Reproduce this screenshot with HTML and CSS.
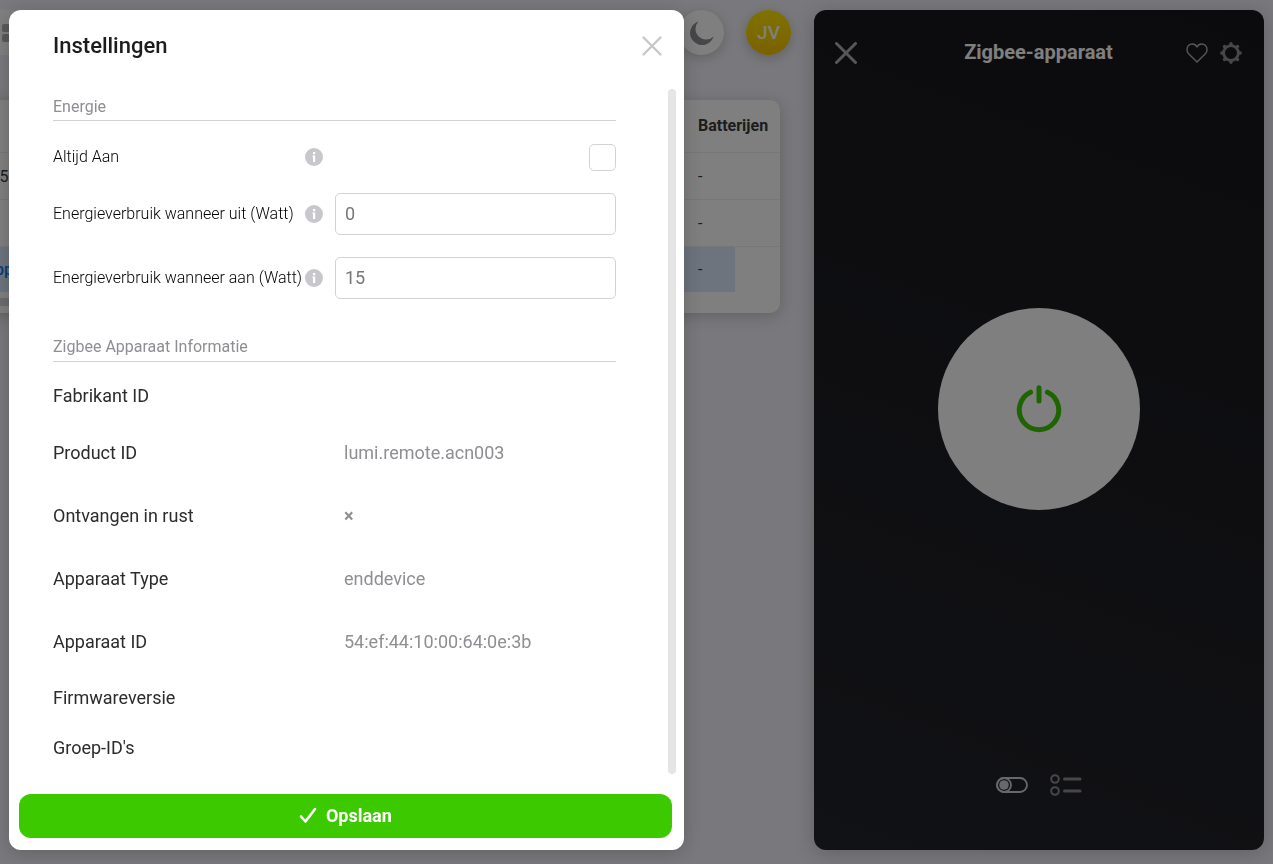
FILE: index.html
```
<!DOCTYPE html>
<html lang="nl">
<head>
    <meta charset="UTF-8">
    <meta name="viewport" content="width=device-width, initial-scale=1">
    <title>Instellingen</title>
    <link rel="stylesheet" href="styles.css">
</head>
<body>
    <div class="page">
        <main class="main">
            <div class="topbar">
                <div class="toolbar">
                    <svg class="grid_icon" viewBox="0 0 18 18"><rect width="8" height="8" rx="2"/><rect x="10" width="8" height="8" rx="2"/><rect y="10" width="8" height="8" rx="2"/><rect x="10" y="10" width="8" height="8" rx="2"/></svg>
                </div>
                <button class="round" type="button" aria-label="Donkere modus">
                    <svg class="moon" viewBox="0 0 24 24"><path d="M8.5 0.6A12 12 0 1 0 23.6 15.4A9.6 9.6 0 0 1 8.5 0.6Z"/></svg>
                </button>
                <button class="round avatar" type="button">JV</button>
            </div>
            <div class="card">
                <table class="devices">
                    <thead>
                        <tr><th></th><th>Batterijen</th><th></th></tr>
                    </thead>
                    <tbody>
                        <tr><td>Sensor M5</td><td>-</td><td></td></tr>
                        <tr><td></td><td>-</td><td></td></tr>
                        <tr class="selected"><td>Zigbee-apparaat</td><td>-</td><td></td></tr>
                    </tbody>
                </table>
                <div class="hscroll"></div>
            </div>
        </main>
        <aside class="device">
            <header class="device_head">
                <button class="icon_btn" type="button" aria-label="Sluiten">
                    <svg class="close_big" viewBox="0 0 22 22"><path d="M1.5 1.5L20.5 20.5M20.5 1.5L1.5 20.5"/></svg>
                </button>
                <h2 class="device_title">Zigbee-apparaat</h2>
                <div class="device_actions">
                    <button class="icon_btn" type="button" aria-label="Favoriet">
                        <svg class="heart" viewBox="0 0 22 20"><path d="M11 19L2.4 10.4A5.4 5.4 0 0 1 1 6.6C1 3.4 3.3 1 6.2 1C8.4 1 10.2 2.2 11 4C11.8 2.2 13.6 1 15.8 1C18.7 1 21 3.4 21 6.6A5.4 5.4 0 0 1 19.6 10.4Z"/></svg>
                    </button>
                    <button class="icon_btn" type="button" aria-label="Instellingen">
                        <svg class="gear" viewBox="0 0 22 22">
                            <circle class="gear_ring" cx="11" cy="11" r="7.4"/>
                            <g class="gear_teeth">
                                <path d="M11 1.8V3.4M11 18.6V20.2M1.8 11H3.4M18.6 11H20.2"/>
                                <path d="M4.5 4.5L5.6 5.6M16.4 16.4L17.5 17.5M4.5 17.5L5.6 16.4M16.4 5.6L17.5 4.5"/>
                            </g>
                        </svg>
                    </button>
                </div>
            </header>
            <div class="device_body">
                <button class="power" type="button" aria-label="Aan/uit">
                    <svg class="power_icon" viewBox="0 0 46 48"><path d="M14.5 7.2A19.7 19.7 0 1 0 31.5 7.2M23 2.8V16"/></svg>
                </button>
            </div>
            <footer class="device_foot">
                <button class="icon_btn" type="button" aria-label="Schakelaar">
                    <svg class="switch" viewBox="0 0 32 16"><rect x="1" y="1" width="30" height="14" rx="7"/><circle cx="8" cy="8" r="7"/><circle class="dot" cx="8" cy="8" r="4.8"/></svg>
                </button>
                <button class="icon_btn" type="button" aria-label="Lijst">
                    <svg class="list" viewBox="0 0 32 22"><circle cx="5" cy="5" r="3.8"/><circle cx="5" cy="17" r="3.8"/><path d="M14.5 5H30M14.5 17H30"/></svg>
                </button>
            </footer>
        </aside>
    </div>

    <div class="overlay">
        <form class="modal" role="dialog" aria-labelledby="modal_title">
            <div class="modal_head">
                <h1 class="modal_title" id="modal_title">Instellingen</h1>
                <button class="icon_btn" type="button" aria-label="Sluiten">
                    <svg class="close" viewBox="0 0 20 20"><path d="M1.5 1.5L18.5 18.5M18.5 1.5L1.5 18.5"/></svg>
                </button>
            </div>
            <div class="modal_body">
                <div class="fields">
                    <h3 class="section">Energie</h3>
                    <div class="row check_row">
                        <div class="name">
                            <label for="always_on">Altijd Aan</label>
                            <svg class="info" viewBox="0 0 18 18"><circle cx="9" cy="9" r="9"/><path d="M8 4H10.2V6.2H8ZM7.4 7.6H10.2V14H8V8.8H7.4Z"/></svg>
                        </div>
                        <input class="check" type="checkbox" id="always_on">
                    </div>
                    <div class="row">
                        <div class="name">
                            <label for="watt_off">Energieverbruik wanneer uit (Watt)</label>
                            <svg class="info" viewBox="0 0 18 18"><circle cx="9" cy="9" r="9"/><path d="M8 4H10.2V6.2H8ZM7.4 7.6H10.2V14H8V8.8H7.4Z"/></svg>
                        </div>
                        <input class="text" type="text" id="watt_off" value="0">
                    </div>
                    <div class="row">
                        <div class="name">
                            <label for="watt_on">Energieverbruik wanneer aan (Watt)</label>
                            <svg class="info" viewBox="0 0 18 18"><circle cx="9" cy="9" r="9"/><path d="M8 4H10.2V6.2H8ZM7.4 7.6H10.2V14H8V8.8H7.4Z"/></svg>
                        </div>
                        <input class="text" type="text" id="watt_on" value="15">
                    </div>
                    <h3 class="section second">Zigbee Apparaat Informatie</h3>
                    <dl class="details">
                        <div class="detail"><dt>Fabrikant ID</dt><dd></dd></div>
                        <div class="detail filled"><dt>Product ID</dt><dd>lumi.remote.acn003</dd></div>
                        <div class="detail filled"><dt>Ontvangen in rust</dt><dd class="flag">×</dd></div>
                        <div class="detail filled"><dt>Apparaat Type</dt><dd>enddevice</dd></div>
                        <div class="detail filled"><dt>Apparaat ID</dt><dd>54:ef:44:10:00:64:0e:3b</dd></div>
                        <div class="detail"><dt>Firmwareversie</dt><dd></dd></div>
                        <div class="detail"><dt>Groep-ID's</dt><dd></dd></div>
                    </dl>
                </div>
                <div class="scrollbar"></div>
            </div>
            <button class="save" type="submit">
                <svg class="tick" viewBox="0 0 18 18"><path d="M2 10.5L6.5 15.5L16 3"/></svg>
                Opslaan
            </button>
        </form>
    </div>
</body>
</html>
```

FILE: styles.css
```
*{
    box-sizing: border-box;
}
body{
    margin: 0;
    height: 100vh;
    overflow: hidden;
    background-color: #f2f1f8;
    color: #1c1c1e;
    font-family: Roboto, "Liberation Sans", sans-serif;
    font-size: 16px;
}
button{
    border: 0;
    padding: 0;
    background: none;
    font-family: inherit;
    cursor: pointer;
}
svg{
    display: block;
}
.icon_btn svg{
    fill: none;
    stroke-linecap: round;
    stroke-linejoin: round;
}
/* page under the dialog */
.page{
    display: grid;
    grid-template-columns: minmax(0, 1fr) 450px;
    gap: 34px;
    height: 100vh;
    padding: 10px 9px 14px 0;
}
.main{
    /* the list is scrolled partly out of view */
    margin-left: -80px;
}
.topbar{
    display: flex;
    gap: 22px;
    height: 45px;
    margin-right: -11px;
}
.toolbar{
    flex: 1;
    display: flex;
    align-items: center;
    padding-left: 82px;
    background-color: #fff;
}
.grid_icon{
    width: 18px;
    fill: #b4b4b8;
}
.round{
    display: flex;
    align-items: center;
    justify-content: center;
    width: 45px;
    height: 45px;
    border-radius: 50%;
    background-color: #fff;
    box-shadow: 0 3px 12px rgba(0,0,0,.2);
}
.moon{
    width: 24px;
    fill: #8e8e93;
}
.avatar{
    background: linear-gradient(#ffe600, #f4c200);
    color: #fff;
    font-size: 19px;
    font-weight: 500;
}
.card{
    height: 213px;
    margin-top: 45px;
    border-radius: 0 10px 10px 0;
    background-color: #fff;
    box-shadow: 0 3px 16px rgba(0,0,0,.2);
}
.devices{
    width: 100%;
    border-collapse: collapse;
    table-layout: fixed;
    text-align: left;
    color: #3a3a3c;
}
.devices th{
    height: 52px;
    padding: 0;
    white-space: nowrap;
    font-weight: 700;
}
.devices td{
    height: 47px;
    padding: 2px 0 0;
}
.devices tr{
    border-bottom: 1px solid #eeeef2;
}
.devices tbody tr:last-child{
    border-bottom: 0;
}
.devices .selected td{
    height: 46px;
    padding-top: 0;
}
.devices td:first-child{
    padding-left: 12px;
}
.devices th:nth-child(2),
.devices td:nth-child(2){
    width: 51px;
    padding-left: 14px;
}
.devices th:nth-child(3){
    width: 45px;
}
.devices .selected td:first-child,
.devices .selected td:nth-child(2){
    background-color: #dae8fa;
}
.devices .selected td:first-child{
    color: #0a7aff;
    font-weight: 500;
}
.hscroll{
    width: 50%;
    height: 8px;
    margin-top: 6px;
    background-color: #d8d8dc;
}
/* device panel */
.device{
    display: flex;
    flex-direction: column;
    border-radius: 12px;
    background: linear-gradient(200deg, #17161c, #22242a);
    box-shadow: 0 3px 20px rgba(0,0,0,.2);
    color: #fff;
}
.device_head{
    display: grid;
    grid-template-columns: 1fr auto 1fr;
    align-items: center;
    height: 86px;
    margin-bottom: 2px;
    padding: 0 22px 0 21px;
}
.device_title{
    margin: 0;
    padding-bottom: 2px;
    font-size: 20px;
    line-height: 24px;
    font-weight: 700;
}
.device_actions{
    display: flex;
    justify-content: flex-end;
    gap: 12px;
}
.close_big{
    width: 22px;
    stroke: #aeaeb2;
    stroke-width: 3;
}
.heart{
    width: 22px;
    stroke: #aeaeb2;
    stroke-width: 1.4;
}
.gear{
    width: 22px;
}
.gear_ring{
    stroke: #8e8e93;
    stroke-width: 2.8;
}
.gear_teeth{
    stroke: #8e8e93;
    stroke-width: 3.4;
}
.device_body{
    flex: 1;
    display: flex;
    align-items: center;
    justify-content: center;
}
.power{
    display: flex;
    align-items: center;
    justify-content: center;
    width: 202px;
    height: 202px;
    border-radius: 50%;
    background-color: #fff;
}
.power_icon{
    width: 46px;
    fill: none;
    stroke: #3dc900;
    stroke-width: 5;
    stroke-linecap: round;
}
.device_foot{
    display: flex;
    align-items: center;
    justify-content: center;
    gap: 22px;
    height: 130px;
}
.switch{
    width: 32px;
    stroke: #d1d1d6;
    stroke-width: 1.8;
}
.switch .dot{
    fill: #d1d1d6;
    stroke: none;
}
.list{
    width: 32px;
    stroke: #8e8e93;
    stroke-width: 2;
}
.list path{
    stroke-width: 3;
}
/* dialog */
.overlay{
    position: fixed;
    inset: 0;
    display: flex;
    padding: 10px 9px 14px;
    background-color: rgba(0,0,0,.5);
}
.modal{
    display: flex;
    flex-direction: column;
    width: 53vw;
    padding-bottom: 12px;
    border-radius: 12px;
    background-color: #fff;
    box-shadow: 0 3px 20px rgba(0,0,0,.2);
}
.modal_head{
    display: flex;
    align-items: center;
    justify-content: space-between;
    height: 72px;
    padding: 0 22px 0 44px;
}
.modal_title{
    margin: 0;
    font-size: 22px;
    line-height: 28px;
    font-weight: 500;
}
.close{
    width: 20px;
    stroke: #c7c7cc;
    stroke-width: 2.4;
}
.modal_body{
    flex: 1;
    display: flex;
    gap: 52px;
    min-height: 0;
    padding: 0 8px 0 44px;
}
.fields{
    flex: 1;
}
.scrollbar{
    width: 8px;
    margin: 7px 0 20px;
    border-radius: 4px;
    background-color: #e5e5e5;
}
.section{
    margin: 0;
    padding: 15px 0 3px;
    border-bottom: 1px solid #d1d1d6;
    color: #8e8e93;
    font-size: 16px;
    line-height: 20px;
    font-weight: 400;
}
.section.second{
    margin-top: 12px;
    padding-bottom: 4px;
}
.row{
    display: grid;
    grid-template-columns: 282px 1fr;
    align-items: center;
    height: 64px;
}
.check_row{
    height: 72px;
    margin-bottom: -11px;
}
.name{
    display: flex;
    align-items: center;
    justify-content: space-between;
    padding-right: 12px;
    line-height: 20px;
    white-space: nowrap;
    font-weight: 300;
    color: #000;
}
.info{
    flex: none;
    width: 18px;
    fill: #c7c7cc;
}
.info path{
    fill: #fff;
}
.check{
    appearance: none;
    justify-self: end;
    width: 27px;
    height: 27px;
    margin: 0;
    border: 1px solid #d1d1d6;
    border-radius: 5px;
    background-color: #fff;
}
.check:checked{
    background-color: #3dc900;
}
.text{
    width: 100%;
    height: 42px;
    padding: 0 9px 2px;
    border: 1px solid #d1d1d6;
    border-radius: 5px;
    color: #77777b;
    font-family: inherit;
    font-size: 18px;
}
.details{
    margin: 9px 0 0;
    font-size: 18px;
    line-height: 24px;
}
.detail{
    display: grid;
    grid-template-columns: 282px 1fr;
    align-items: center;
    height: 50px;
}
.detail.filled{
    height: 63px;
}
.detail dt{
    color: #2c2c2e;
}
.detail dd{
    margin: 0;
    padding-left: 9px;
    color: #8e8e93;
}
.detail .flag{
    font-weight: 700;
}
.save{
    display: flex;
    align-items: center;
    justify-content: center;
    gap: 9px;
    height: 44px;
    margin: 0 12px 0 10px;
    padding-bottom: 2px;
    border-radius: 12px;
    background-color: #3dc900;
    color: #fff;
    font-size: 18px;
    font-weight: 700;
}
.tick{
    width: 18px;
    fill: none;
    stroke: #fff;
    stroke-width: 2.6;
    stroke-linecap: round;
    stroke-linejoin: round;
}
```
